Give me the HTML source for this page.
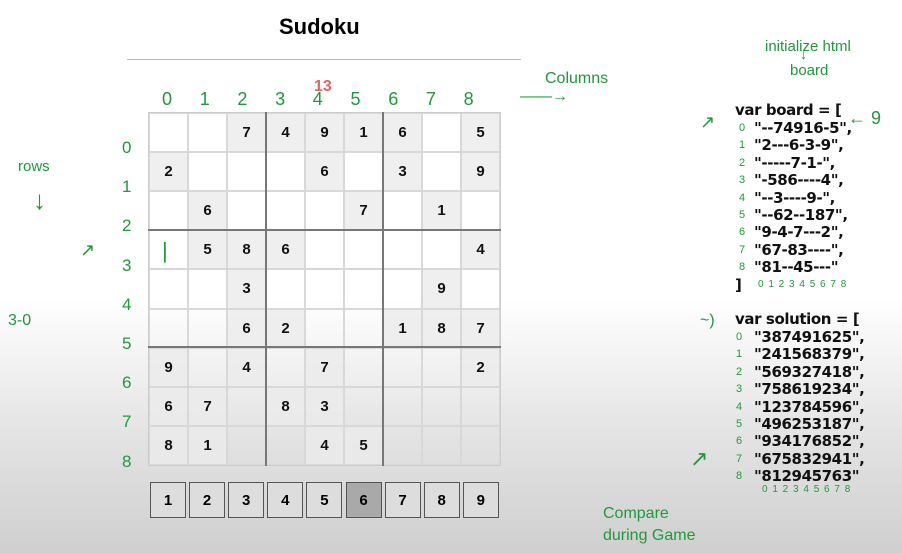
<!DOCTYPE html>
<html><head><meta charset="utf-8"><style>
*{margin:0;padding:0;box-sizing:border-box}
body{width:902px;height:553px;overflow:hidden;position:relative;font-family:"Liberation Sans",sans-serif;
background:linear-gradient(to bottom,#fff 0,#fff 300px,#e6e6e6 420px,#cfcfcf 553px)}
.a{position:absolute;white-space:nowrap}
#g{position:absolute;left:148px;top:112px;width:353px;height:354px;display:grid;grid-template-columns:repeat(9,1fr);grid-template-rows:repeat(9,1fr);border:1px solid #ccc}
#g div{border:1px solid #d8d8d8;display:flex;align-items:center;justify-content:center;font-weight:bold;font-size:15px;color:#111}
#g div.f{background:rgba(235,235,235,.8)}
.tl{position:absolute;background:#777}
.btn{position:absolute;top:482px;width:36px;height:36px;border:1.5px solid #555;background:#ddd;display:flex;align-items:center;justify-content:center;font-weight:bold;font-size:15px}
.code{position:absolute;white-space:nowrap;font-weight:bold;font-size:15px;color:#111;font-family:"DejaVu Sans","Liberation Sans",sans-serif;letter-spacing:-0.4px;line-height:17px}
.gr{color:#1f9a3a;font-family:"Liberation Sans",sans-serif}
</style></head><body>
<div class="a" style="left:279px;top:14px;font-size:22px;font-weight:bold">Sudoku</div>
<div class="a" style="left:127px;top:59px;width:394px;height:1px;background:#bbb"></div>
<div class="a" style="left:314px;top:78px;font-size:16px;font-weight:bold;color:#e06666">13</div>
<div id="g"></div>
<div class="tl" style="left:265px;top:112px;width:2px;height:354px"></div>
<div class="tl" style="left:382px;top:112px;width:2px;height:354px"></div>
<div class="tl" style="left:148px;top:229px;width:353px;height:2px"></div>
<div class="tl" style="left:148px;top:346px;width:353px;height:2px"></div>
<div id="b"></div>
<div id="cl"></div>
<div class="a gr" style="left:545px;top:70px;font-size:16px">Columns</div>
<div class="a gr" style="left:520px;top:88px;font-size:16px">——→</div>
<div class="a gr" style="left:765px;top:38px;font-size:15px">initialize html</div>
<div class="a gr" style="left:790px;top:62px;font-size:15px">board</div>
<div class="a gr" style="left:800px;top:46px;font-size:14px">↓</div>
<div class="a gr" style="left:18px;top:158px;font-size:15px">rows</div>
<div class="a gr" style="left:33px;top:185px;font-size:26px">↓</div>
<div class="a gr" style="left:8px;top:312px;font-size:16px">3-0</div>
<div class="a gr" style="left:80px;top:240px;font-size:18px">↗</div>
<div class="a gr" style="left:162px;top:238px;font-size:22px">|</div>
<div class="a gr" style="left:700px;top:112px;font-size:18px">↗</div>
<div class="a gr" style="left:848px;top:108px;font-size:18px">← 9</div>
<div class="a gr" style="left:700px;top:312px;font-size:16px">~)</div>
<div class="a gr" style="left:690px;top:446px;font-size:22px">↗</div>
<div class="a gr" style="left:603px;top:505px;font-size:16px">Compare</div>
<div class="a gr" style="left:603px;top:527px;font-size:16px">during Game</div>
<div class="a gr" style="left:122px;top:128px;font-size:17px;line-height:39.2px">0<br>1<br>2<br>3<br>4<br>5<br>6<br>7<br>8</div>
<div id="code"></div>
<script>
var b=["--74916-5","2---6-3-9","-6---7-1-","-586----4","--3----9-","--62--187","9-4-7---2","67-83----","81--45---"];
var g=document.getElementById('g'),h='';
for(var r=0;r<9;r++)for(var c=0;c<9;c++){var ch=b[r][c];h+='<div class="'+(ch!='-'?'f':'')+'">'+(ch!='-'?ch:'')+'</div>';}
g.innerHTML=h;
var s='';for(var i=0;i<9;i++){s+='<div class="btn" style="left:'+(150+i*39.1)+'px;'+(i==5?'background:#a9a9a9':'')+'">'+(i+1)+'</div>';}
document.getElementById('b').innerHTML=s;
var cl='';for(var i=0;i<9;i++){cl+='<div class="a gr" style="left:'+(162+i*37.7)+'px;top:89px;font-size:18px">'+i+'</div>';}
document.getElementById('cl').innerHTML=cl;
var bs=['"--74916-5",','"2---6-3-9",','"-----7-1-",','"-586----4",','"--3----9-",','"--62--187",','"9-4-7---2",','"67-83----",','"81--45---"'];
var ss=['"387491625",','"241568379",','"569327418",','"758619234",','"123784596",','"496253187",','"934176852",','"675832941",','"812945763"'];
var o='<div class="code" style="left:735px;top:102px">var board = [</div>';
for(var i=0;i<9;i++){o+='<div class="code" style="left:754px;top:'+(120+i*17.4)+'px">'+bs[i]+'</div><div class="a gr" style="left:739px;top:'+(122+i*17.4)+'px;font-size:11px">'+i+'</div>';}
o+='<div class="code" style="left:735px;top:277px">]</div><div class="a gr" style="left:758px;top:279px;font-size:10px;letter-spacing:1px">0 1 2 3 4 5 6 7 8</div>';
o+='<div class="code" style="left:735px;top:311px">var solution = [</div>';
for(var i=0;i<9;i++){o+='<div class="code" style="left:754px;top:'+(329+i*17.4)+'px">'+ss[i]+'</div><div class="a gr" style="left:736px;top:'+(331+i*17.4)+'px;font-size:11px">'+i+'</div>';}
o+='<div class="a gr" style="left:762px;top:484px;font-size:10px;letter-spacing:1px">0 1 2 3 4 5 6 7 8</div>';
document.getElementById('code').innerHTML=o;
</script>
</body></html>
